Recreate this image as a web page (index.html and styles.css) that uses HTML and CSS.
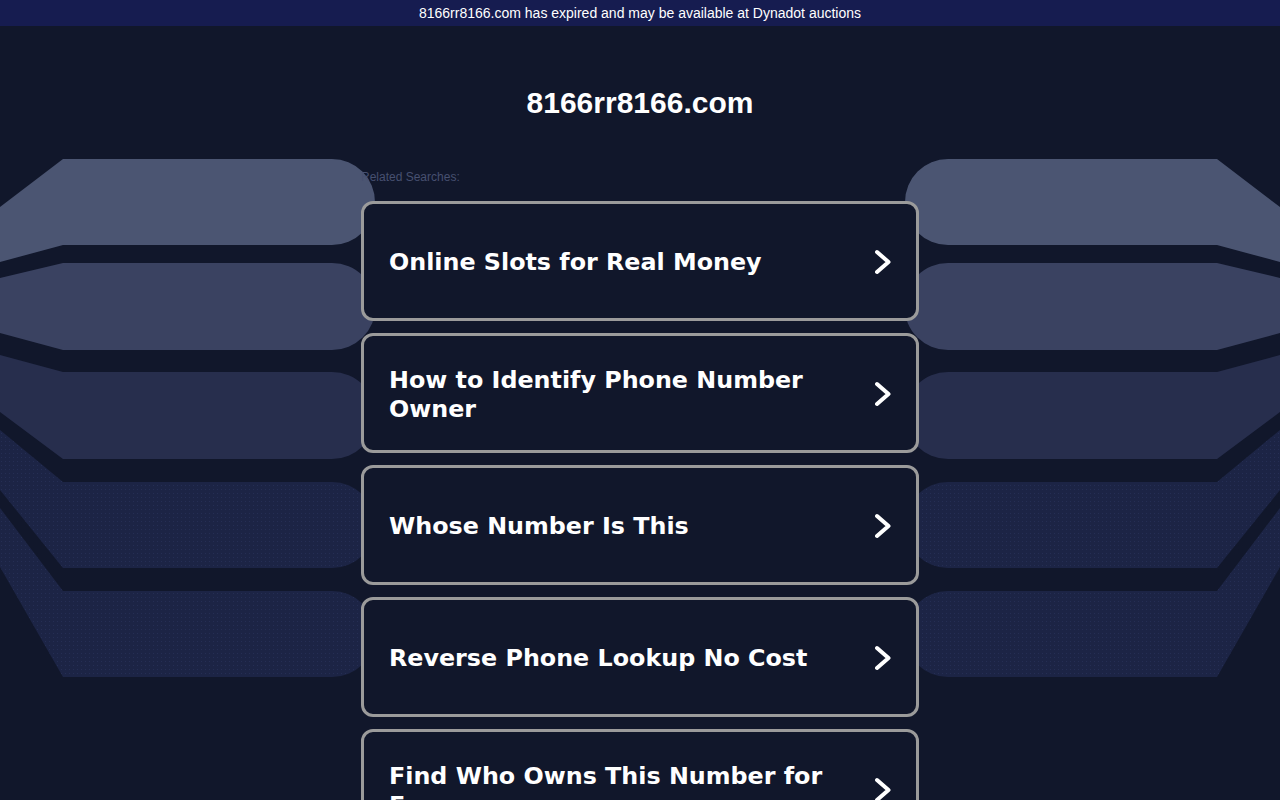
FILE: index.html
```html
<!DOCTYPE html>
<html lang="en">
<head>
  <meta charset="UTF-8">
  <meta name="viewport" content="width=device-width, initial-scale=1.0">
  <title>8166rr8166.com</title>
  <link rel="stylesheet" href="styles.css">
</head>
<body>

<!-- background stack -->
<svg class="backdrop" width="1280" height="800" viewBox="0 0 1280 800" aria-hidden="true">
  <defs>
    <pattern id="dots" width="4" height="4" patternUnits="userSpaceOnUse">
      <rect width="4" height="4" fill="#1c2445"/>
      <rect x="1" y="1" width="1" height="1" fill="#252e54"/>
    </pattern>
    <g id="stack">
      <path d="M63,159 H332 A43,43 0 0 1 332,245 H63 L0,262 V207 Z" fill="#4b5572"/>
      <path d="M63,263 H332 A43.5,43.5 0 0 1 332,350 H63 L0,333 V278 Z" fill="#3a4261"/>
      <path d="M63,372 H332 A43.5,43.5 0 0 1 332,459 H63 L0,412 V355 Z" fill="#272e4d"/>
      <path d="M63,482 H332 A43,43 0 0 1 332,568 H63 L0,490 V430 Z" fill="url(#dots)"/>
      <path d="M63,591 H332 A43,43 0 0 1 332,677 H63 L0,567 V508 Z" fill="url(#dots)"/>
    </g>
  </defs>
  <use href="#stack"/>
  <use href="#stack" transform="translate(1280,0) scale(-1,1)"/>
</svg>

<div class="topbar">8166rr8166.com has expired and may be available at Dynadot auctions</div>

<div class="main">
  <h1>8166rr8166.com</h1>

  <div class="related">
    <div class="related-title">Related Searches:</div>

    <a class="card" href="#">
      <span class="card-text">Online Slots for Real Money</span>
      <svg class="chevron" width="16" height="26" viewBox="0 0 16 26"><path d="M2,3 L13.5,13 L2,23" /></svg>
    </a>
    <a class="card" href="#">
      <span class="card-text">How to Identify Phone Number Owner</span>
      <svg class="chevron" width="16" height="26" viewBox="0 0 16 26"><path d="M2,3 L13.5,13 L2,23" /></svg>
    </a>
    <a class="card" href="#">
      <span class="card-text">Whose Number Is This</span>
      <svg class="chevron" width="16" height="26" viewBox="0 0 16 26"><path d="M2,3 L13.5,13 L2,23" /></svg>
    </a>
    <a class="card" href="#">
      <span class="card-text">Reverse Phone Lookup No Cost</span>
      <svg class="chevron" width="16" height="26" viewBox="0 0 16 26"><path d="M2,3 L13.5,13 L2,23" /></svg>
    </a>
    <a class="card" href="#">
      <span class="card-text">Find Who Owns This Number for Free</span>
      <svg class="chevron" width="16" height="26" viewBox="0 0 16 26"><path d="M2,3 L13.5,13 L2,23" /></svg>
    </a>
  </div>
</div>

</body>
</html>
```

FILE: styles.css
```css
body {
  margin: 0;
  background-color: #11172b;
  font-family: "Liberation Sans", Arial, sans-serif;
  color: #fff;
  overflow: hidden;
}

.backdrop {
  position: absolute;
  left: 0;
  top: 0;
  z-index: 0;
}

.topbar {
  position: relative;
  height: 26px;
  line-height: 26px;
  background-color: #161c50;
  text-align: center;
  font-size: 14px;
  color: #fff;
}

.main {
  position: relative;
  z-index: 1;
}

h1 {
  margin: 59px 0 0;
  text-align: center;
  font-size: 30px;
  line-height: 36px;
  font-weight: bold;
}

.related {
  width: 558px;
  margin: 49px auto 0;
}

.related-title {
  font-size: 12px;
  line-height: 14px;
  color: #475070;
  margin-bottom: 17px;
}

.card {
  display: flex;
  align-items: center;
  justify-content: space-between;
  box-sizing: border-box;
  height: 120px;
  padding: 3px 25px 0;
  margin-bottom: 12px;
  border: 3px solid #9b9b9b;
  border-radius: 12px;
  background-color: #11172b;
  color: #fff;
  text-decoration: none;
}

.card-text {
  width: 464px;
  font-family: "DejaVu Sans", Verdana, sans-serif;
  font-weight: bold;
  font-size: 23.8px;
  line-height: 29px;
}

.chevron {
  margin-top: -2px;
}

.chevron path {
  fill: none;
  stroke: #fff;
  stroke-width: 4;
  stroke-linecap: round;
  stroke-linejoin: round;
}
```
